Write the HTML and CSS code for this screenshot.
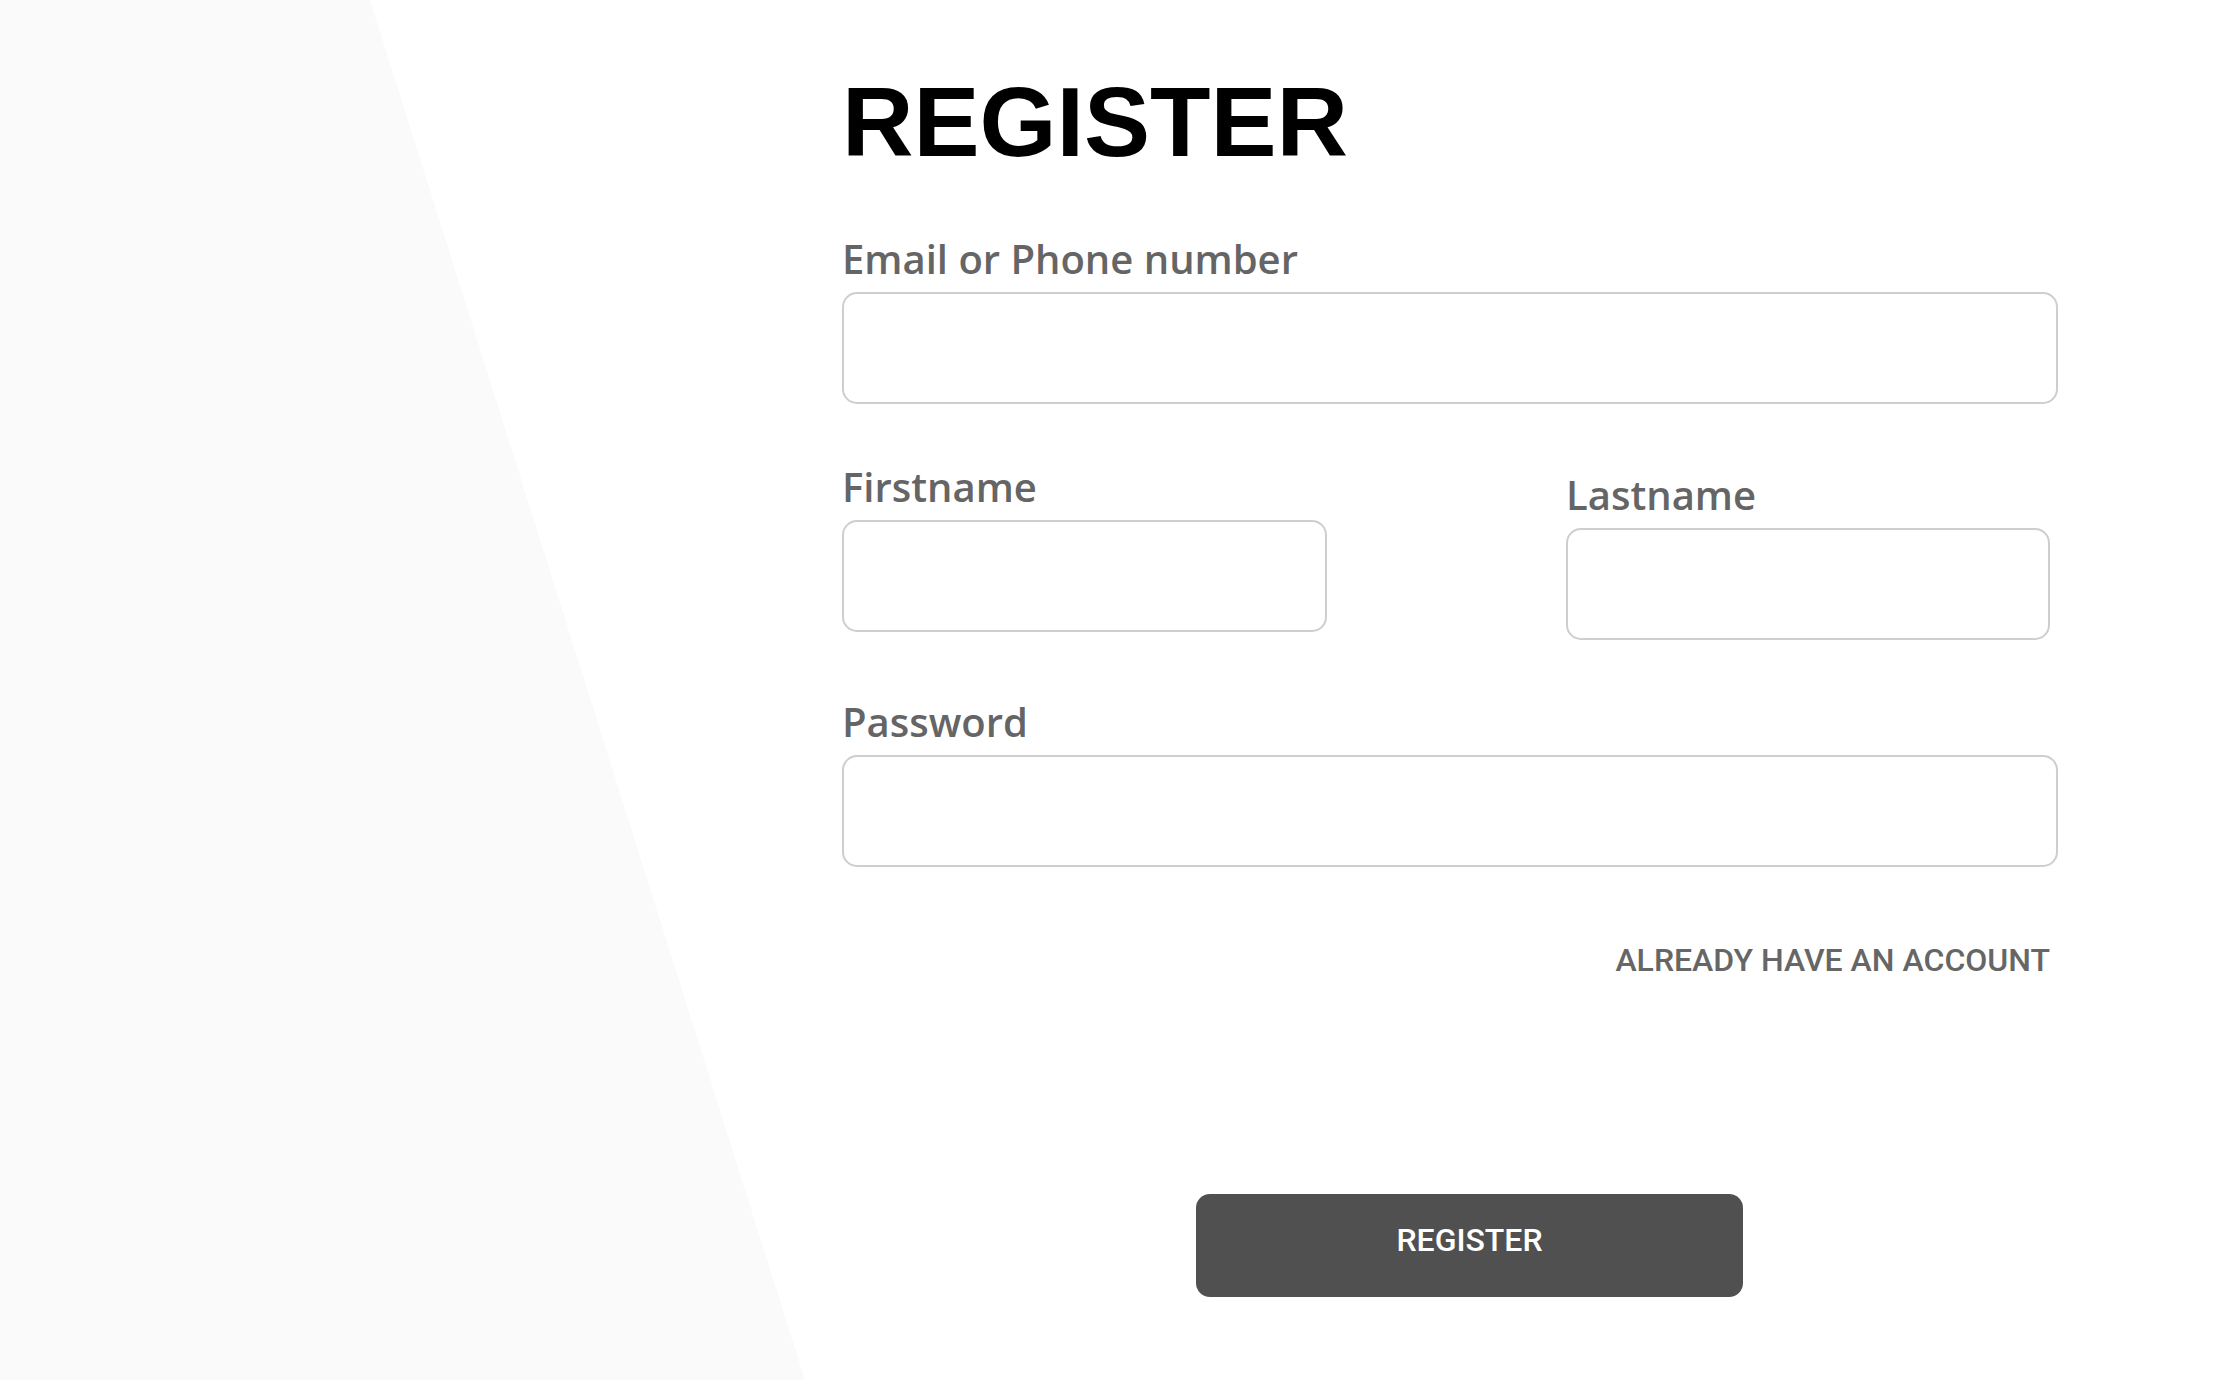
FILE: index.html
```html
<!DOCTYPE html>
<html lang="en">
<head>
<meta charset="utf-8">
<title>Register</title>
<link rel="stylesheet" href="styles.css">
</head>
<body>
<div class="backdrop"></div>
<main class="page">
  <form class="register-form">
    <h1 class="title">REGISTER</h1>
    <div class="field">
      <label class="label" for="email">Email or Phone number</label>
      <input class="input" id="email" type="text">
    </div>
    <div class="name-row">
      <div class="field field-first">
        <label class="label" for="firstname">Firstname</label>
        <input class="input" id="firstname" type="text">
      </div>
      <div class="field field-last">
        <label class="label" for="lastname">Lastname</label>
        <input class="input" id="lastname" type="text">
      </div>
    </div>
    <div class="field field-password">
      <label class="label" for="password">Password</label>
      <input class="input" id="password" type="password">
    </div>
    <div class="account-row">
      <a class="account-link" href="#">ALREADY HAVE AN ACCOUNT</a>
    </div>
    <div class="submit-row">
      <button class="submit" type="button">REGISTER</button>
    </div>
  </form>
</main>
</body>
</html>
```

FILE: styles.css
```css
* {
  box-sizing: border-box;
}

html, body {
  margin: 0;
  padding: 0;
  background: #ffffff;
}

body {
  width: 2238px;
  height: 1380px;
  overflow: hidden;
  position: relative;
  font-family: "Open Sans", "Liberation Sans", sans-serif;
}

.backdrop {
  position: absolute;
  left: 0;
  top: 0;
  width: 810px;
  height: 1380px;
  background: #fafafa;
  clip-path: polygon(0 0, 370px 0, 805px 1380px, 0 1380px);
  z-index: 0;
}

.page {
  position: relative;
  z-index: 1;
  padding-left: 842px;
  padding-top: 72px;
}

.register-form {
  width: 1216px;
  display: flex;
  flex-direction: column;
}

.title {
  margin: 0;
  font-family: "Liberation Sans", Arial, sans-serif;
  font-weight: 700;
  font-size: 99px;
  line-height: 99px;
  color: #000000;
  letter-spacing: 0;
}

.field {
  display: flex;
  flex-direction: column;
}

.title + .field {
  margin-top: 63px;
}

.label {
  font-family: "Open Sans", sans-serif;
  font-weight: 600;
  font-size: 40px;
  line-height: 50px;
  color: #656565;
  margin-bottom: 8px;
}

.input {
  display: block;
  width: 100%;
  height: 112px;
  border: 2px solid #cecece;
  border-radius: 15px;
  background: #ffffff;
  outline: none;
  font-size: 32px;
  padding: 0 20px;
}

.name-row {
  display: flex;
  align-items: flex-start;
  gap: 239px;
  margin-top: 58px;
}

.field-first {
  width: 485px;
}

.field-last {
  width: 484px;
  margin-top: 8px;
}

.field-password {
  margin-top: 57px;
}

.account-row {
  display: flex;
  justify-content: flex-end;
  padding-right: 8px;
  margin-top: 75px;
}

.account-link {
  font-family: Roboto, "Liberation Sans", sans-serif;
  font-weight: 500;
  font-size: 32px;
  line-height: 36px;
  color: #666666;
  text-decoration: none;
}

.submit-row {
  display: flex;
  margin-top: 216px;
  padding-left: 354px;
}

.submit {
  width: 547px;
  height: 103px;
  padding: 28px 0 39px;
  border: none;
  border-radius: 14px;
  background: #505050;
  color: #ffffff;
  font-family: Roboto, "Liberation Sans", sans-serif;
  font-weight: 500;
  font-size: 32px;
  line-height: 36px;
  text-align: center;
  cursor: pointer;
}
```
